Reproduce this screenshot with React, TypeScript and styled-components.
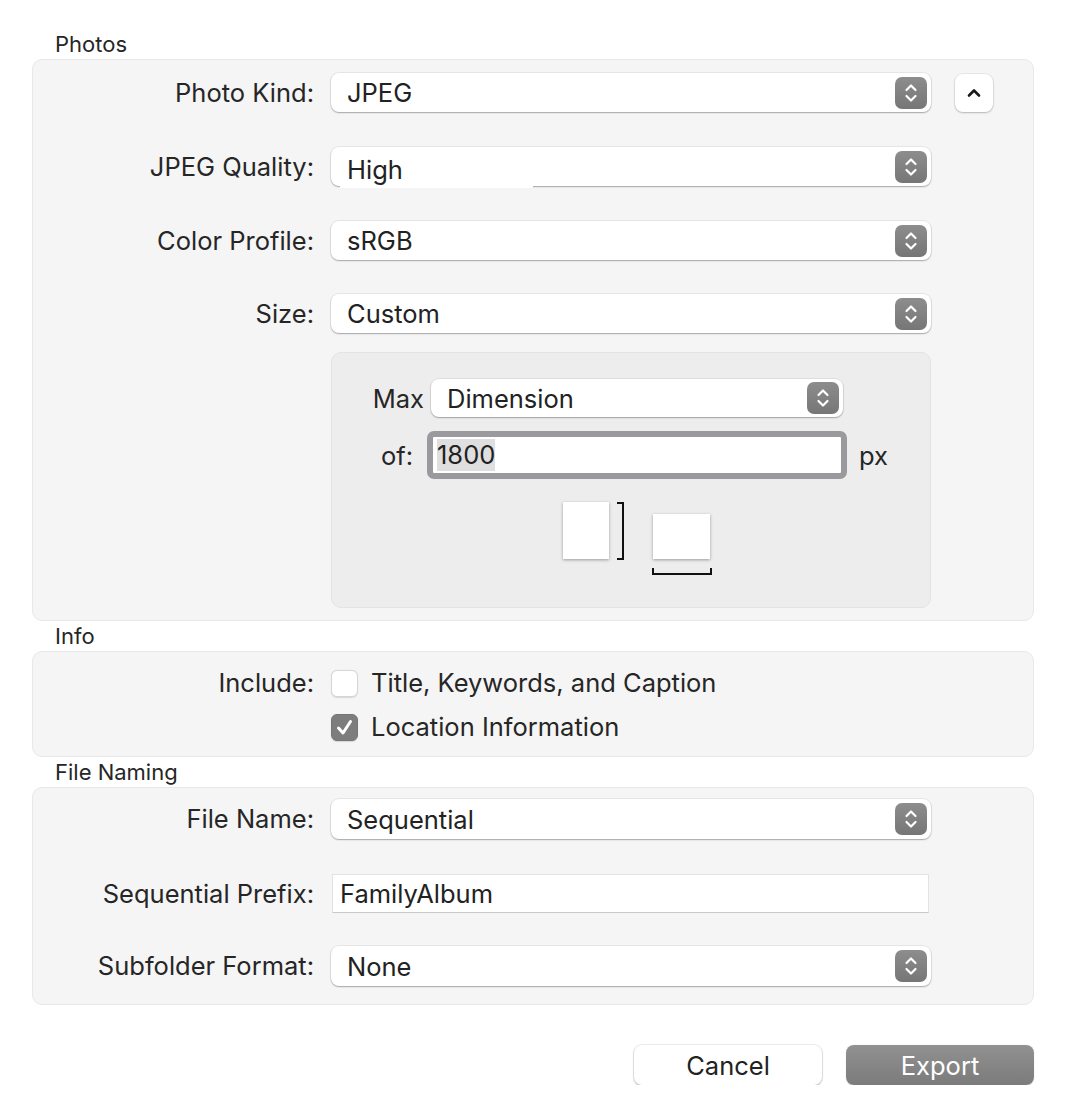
import React from "react";
import styled, { createGlobalStyle } from "styled-components";

const Global = createGlobalStyle`
  html, body { margin: 0; padding: 0; background: #ffffff; }
  body { font-family: Inter, "Noto Sans", "Liberation Sans", sans-serif; color: #262626; }
  * { box-sizing: border-box; }
`;

const Page = styled.div`
  width: 1065px;
  padding: 29px 31px 0 32px;
`;

const SectionTitle = styled.div`
  height: 30px;
  line-height: 30px;
  padding-left: 23px;
  font-size: 22px;
  color: #262626;
`;

const Panel = styled.div<{ $pt: number; $pb: number }>`
  background: #f5f5f5;
  border: 1px solid #e8e8e8;
  border-radius: 10px;
  padding: ${(p) => p.$pt}px 0 ${(p) => p.$pb}px 0;
  display: flex;
  flex-direction: column;
`;

const Row = styled.div<{ $mt?: number }>`
  display: grid;
  grid-template-columns: 281px 600px 1fr;
  column-gap: 17px;
  align-items: center;
  margin-top: ${(p) => p.$mt ?? 0}px;
`;

const Label = styled.div`
  text-align: right;
  font-size: 25.5px;
  line-height: 28px;
  color: #262626;
  white-space: nowrap;
`;

const PopupBox = styled.div<{ $h?: number }>`
  position: relative;
  height: ${(p) => p.$h ?? 39}px;
  display: flex;
  align-items: center;
  padding: 0 4px 0 16px;
  background: #ffffff;
  border-radius: 8px;
  box-shadow: 0 0 0 1px rgba(0, 0, 0, 0.06), 0 1px 1.5px rgba(0, 0, 0, 0.28);
`;

const PopupValue = styled.span<{ $drop?: number }>`
  flex: 1;
  font-size: 25.5px;
  color: #222;
  transform: translateY(${(p) => p.$drop ?? 0}px);
`;

const Glitch = styled.span`
  position: absolute;
  left: 9px;
  bottom: -2px;
  width: 193px;
  height: 3px;
  background: #ffffff;
`;

const Stepper = styled.span`
  width: 32px;
  height: 32px;
  border-radius: 7px;
  background: linear-gradient(#8d8d8d, #767676);
  display: flex;
  align-items: center;
  justify-content: center;
  flex: none;
`;

const UpButton = styled.div`
  width: 38px;
  height: 38px;
  margin-left: 7px;
  border-radius: 8px;
  background: #ffffff;
  box-shadow: 0 0 0 1px rgba(0, 0, 0, 0.05), 0 1px 2px rgba(0, 0, 0, 0.22);
  display: flex;
  align-items: center;
  justify-content: center;
`;

const StepperIcon = () => (
  <svg width="14" height="22" viewBox="0 0 14 22">
    <polyline points="2.5,8 7,3.5 11.5,8" fill="none" stroke="#fff" strokeWidth="2.2" strokeLinecap="round" strokeLinejoin="round" />
    <polyline points="2.5,14 7,18.5 11.5,14" fill="none" stroke="#fff" strokeWidth="2.2" strokeLinecap="round" strokeLinejoin="round" />
  </svg>
);

const Popup = ({ value, h, drop, glitch }: { value: string; h?: number; drop?: number; glitch?: boolean }) => (
  <PopupBox $h={h}>
    <PopupValue $drop={drop}>{value}</PopupValue>
    <Stepper>
      <StepperIcon />
    </Stepper>
    {glitch && <Glitch />}
  </PopupBox>
);

const SubPanel = styled.div`
  grid-column: 2;
  background: #ededed;
  border: 1px solid #e3e3e3;
  border-radius: 10px;
  padding: 26px 0 32px 0;
  display: grid;
  grid-template-columns: 92px 412px 1fr;
  column-gap: 7px;
  row-gap: 14px;
  align-items: center;
`;

const SubLabel = styled.div<{ $pr?: number }>`
  text-align: right;
  font-size: 25.5px;
  color: #262626;
  padding-right: ${(p) => p.$pr ?? 0}px;
`;

const Unit = styled.div`
  font-size: 25.5px;
  color: #262626;
  margin-left: 9px;
`;

const NumberField = styled.div`
  height: 48px;
  margin: 0 -4px;
  border: 6px solid #9a9a9e;
  border-radius: 7px;
  background: #ffffff;
  display: flex;
  align-items: center;
  padding-left: 4px;
`;

const Selected = styled.span`
  font-size: 25.5px;
  color: #222;
  background: #dfdfdf;
  line-height: 32px;
`;

const Glyphs = styled.div`
  grid-column: 1 / -1;
  display: flex;
  justify-content: center;
  align-items: flex-start;
  gap: 28px;
  padding-left: 12px;
  margin-top: 9px;
`;

const Paper = styled.div<{ $w: number; $h: number }>`
  width: ${(p) => p.$w}px;
  height: ${(p) => p.$h}px;
  background: #ffffff;
  box-shadow: 0 1px 3px rgba(0, 0, 0, 0.35);
`;

const PortraitGroup = styled.div`
  display: flex;
  align-items: flex-start;
  gap: 8px;
`;

const LandscapeGroup = styled.div`
  display: flex;
  flex-direction: column;
  align-items: center;
  gap: 9px;
  margin-top: 12px;
`;

const VBracket = styled.div`
  width: 7px;
  height: 58px;
  border: 2px solid #111;
  border-left: none;
`;

const HBracket = styled.div`
  width: 60px;
  height: 7px;
  border: 2px solid #111;
  border-top: none;
`;

const CheckRow = styled.div`
  height: 28px;
  line-height: 28px;
  display: flex;
  align-items: center;
  gap: 13px;
  font-size: 25.5px;
  color: #262626;
`;

const Box = styled.span<{ $on?: boolean }>`
  width: 27px;
  height: 27px;
  border-radius: 6px;
  flex: none;
  display: flex;
  align-items: center;
  justify-content: center;
  background: ${(p) => (p.$on ? "#7d7d7d" : "#ffffff")};
  border: 1px solid ${(p) => (p.$on ? "#767676" : "#d6d6d6")};
  box-shadow: 0 0.5px 1px rgba(0, 0, 0, 0.12);
`;

const TextField = styled.div`
  height: 39px;
  margin: 0 2px 0 1px;
  background: #ffffff;
  border: 1px solid #e3e3e3;
  border-bottom-color: #c9c9c9;
  display: flex;
  align-items: center;
  padding-left: 7px;
  font-size: 25.5px;
  color: #222;
`;

const Footer = styled.div`
  display: flex;
  justify-content: flex-end;
  gap: 24px;
  margin-top: 40px;
`;

const Button = styled.div<{ $primary?: boolean }>`
  width: 188px;
  height: 40px;
  border-radius: 8px;
  display: flex;
  align-items: center;
  justify-content: center;
  font-size: 25.5px;
  color: ${(p) => (p.$primary ? "#ffffff" : "#222")};
  background: ${(p) => (p.$primary ? "linear-gradient(#919191, #7b7b7b)" : "#ffffff")};
  box-shadow: ${(p) =>
    p.$primary
      ? "0 0.5px 1px rgba(0,0,0,0.2)"
      : "0 0 0 1px rgba(0,0,0,0.07), 0 1px 2px rgba(0,0,0,0.25)"};
`;

export default function App() {
  return (
    <Page>
      <Global />
      <SectionTitle>Photos</SectionTitle>
      <Panel $pt={13} $pb={12}>
        <Row>
          <Label>Photo Kind:</Label>
          <Popup value="JPEG" />
          <UpButton>
            <svg width="14" height="10" viewBox="0 0 14 10">
              <polyline points="2,7.5 7,2.5 12,7.5" fill="none" stroke="#1a1a1a" strokeWidth="2.6" strokeLinecap="round" strokeLinejoin="round" />
            </svg>
          </UpButton>
        </Row>
        <Row $mt={35}>
          <Label>JPEG Quality:</Label>
          <Popup value="High" drop={3} glitch />
        </Row>
        <Row $mt={35}>
          <Label>Color Profile:</Label>
          <Popup value="sRGB" />
        </Row>
        <Row $mt={34}>
          <Label>Size:</Label>
          <Popup value="Custom" />
        </Row>
        <Row $mt={19}>
          <SubPanel>
            <SubLabel>Max</SubLabel>
            <Popup value="Dimension" h={38} />
            <span />
            <SubLabel $pr={11}>of:</SubLabel>
            <NumberField>
              <Selected>1800</Selected>
            </NumberField>
            <Unit>px</Unit>
            <Glyphs>
              <PortraitGroup>
                <Paper $w={46} $h={57} />
                <VBracket />
              </PortraitGroup>
              <LandscapeGroup>
                <Paper $w={57} $h={45} />
                <HBracket />
              </LandscapeGroup>
            </Glyphs>
          </SubPanel>
        </Row>
      </Panel>

      <SectionTitle>Info</SectionTitle>
      <Panel $pt={17} $pb={15}>
        <Row>
          <Label>Include:</Label>
          <CheckRow>
            <Box />
            Title, Keywords, and Caption
          </CheckRow>
        </Row>
        <Row $mt={16}>
          <span />
          <CheckRow>
            <Box $on>
              <svg width="19" height="17" viewBox="0 0 19 17">
                <polyline points="3.5,9 8,14 15.5,2.5" fill="none" stroke="#fff" strokeWidth="3" strokeLinecap="round" strokeLinejoin="round" />
              </svg>
            </Box>
            Location Information
          </CheckRow>
        </Row>
      </Panel>

      <SectionTitle>File Naming</SectionTitle>
      <Panel $pt={11} $pb={18}>
        <Row>
          <Label>File Name:</Label>
          <Popup value="Sequential" h={40} />
        </Row>
        <Row $mt={35}>
          <Label>Sequential Prefix:</Label>
          <TextField>FamilyAlbum</TextField>
        </Row>
        <Row $mt={33}>
          <Label>Subfolder Format:</Label>
          <Popup value="None" h={40} />
        </Row>
      </Panel>

      <Footer>
        <Button>Cancel</Button>
        <Button $primary>Export</Button>
      </Footer>
    </Page>
  );
}
